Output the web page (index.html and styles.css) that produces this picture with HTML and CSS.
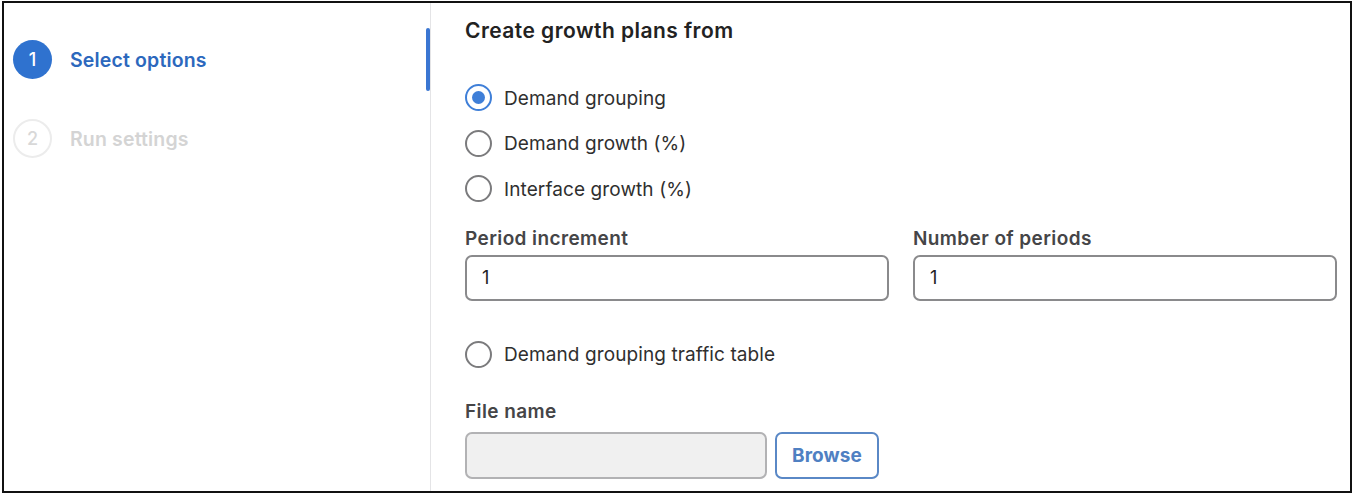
FILE: index.html
```html
<!DOCTYPE html>
<html lang="en">
<head>
<meta charset="utf-8">
<title>Create growth plans</title>
<link rel="stylesheet" href="styles.css">
</head>
<body>
<div class="frame">
  <aside class="sidebar">
    <div class="indicator"></div>
    <div class="step step-active">
      <span class="step-num">1</span>
      <span class="step-label">Select options</span>
    </div>
    <div class="step step-disabled">
      <span class="step-num">2</span>
      <span class="step-label">Run settings</span>
    </div>
  </aside>
  <main class="content">
    <h2 class="title">Create growth plans from</h2>
    <div class="radio-group">
      <label class="radio-row"><span class="radio checked"></span><span class="radio-text">Demand grouping</span></label>
      <label class="radio-row"><span class="radio"></span><span class="radio-text">Demand growth (%)</span></label>
      <label class="radio-row"><span class="radio"></span><span class="radio-text">Interface growth (%)</span></label>
    </div>
    <div class="field-grid">
      <div class="field">
        <div class="field-label">Period increment</div>
        <div class="input">1</div>
      </div>
      <div class="field">
        <div class="field-label">Number of periods</div>
        <div class="input">1</div>
      </div>
    </div>
    <label class="radio-row table-row"><span class="radio"></span><span class="radio-text">Demand grouping traffic table</span></label>
    <div class="file-field">
      <div class="field-label file-label">File name</div>
      <div class="file-row">
        <div class="input input-disabled"></div>
        <button class="browse" type="button">Browse</button>
      </div>
    </div>
  </main>
</div>
</body>
</html>
```
FILE: styles.css
```css
* { box-sizing: border-box; }
html, body { margin: 0; padding: 0; background: #fff; }
body {
  font-family: Inter, "Noto Sans", "Liberation Sans", sans-serif;
  color: #333;
}
.frame {
  margin: 1px 0 0 2px;
  width: 1350px;
  height: 492px;
  border: 2px solid #111;
  display: flex;
  overflow: hidden;
}
.sidebar {
  position: relative;
  width: 427px;
  flex: none;
  border-right: 1px solid #e4e4e6;
  padding: 37px 0 0 9px;
}
.indicator {
  position: absolute;
  right: 0;
  top: 25px;
  width: 4px;
  height: 63px;
  border-radius: 2px;
  background: #3a76d2;
}
.step {
  display: flex;
  align-items: center;
  gap: 18px;
  height: 39px;
  margin-bottom: 40px;
}
.step-num {
  width: 39px;
  height: 39px;
  border-radius: 50%;
  display: flex;
  align-items: center;
  justify-content: center;
  font-size: 18px;
  font-weight: 500;
}
.step-label {
  font-size: 19.5px;
  font-weight: 600;
  letter-spacing: 0.15px;
}
.step-active .step-num { background: #2f72cf; color: #fff; }
.step-active .step-label { color: #2c68bd; }
.step-disabled .step-num { border: 2px solid #ececec; color: #d8d8d8; }
.step-disabled .step-label { color: #d4d4d4; }

.content {
  flex: 1;
  padding: 16px 13px 0 34px;
}
.title {
  margin: 0;
  font-size: 21px;
  font-weight: 600;
  line-height: 24px;
  letter-spacing: 0.45px;
  color: #222;
}
.radio-group {
  margin-top: 32px;
}
.radio-row {
  display: flex;
  align-items: center;
  gap: 12px;
  height: 45.5px;
}
.radio {
  width: 27px;
  height: 27px;
  border-radius: 50%;
  border: 2.5px solid #7b7b7d;
  flex: none;
  display: flex;
  align-items: center;
  justify-content: center;
}
.radio.checked { border-color: #3f7fd8; }
.radio.checked::after {
  content: "";
  width: 13px;
  height: 13px;
  border-radius: 50%;
  background: #3f7fd8;
}
.radio-text {
  font-size: 19px;
  letter-spacing: 0.1px;
  color: #2f2f2f;
  padding-top: 1px;
}
.field-grid {
  display: grid;
  grid-template-columns: 1fr 1fr;
  column-gap: 24px;
  margin-top: 16px;
}
.field-label {
  font-size: 19px;
  font-weight: 600;
  line-height: 22px;
  letter-spacing: 0.4px;
  color: #454547;
}
.input {
  margin-top: 5px;
  height: 46px;
  border: 2px solid #8a8a8c;
  border-radius: 7px;
  padding: 0 15px;
  display: flex;
  align-items: center;
  font-size: 18px;
  color: #222;
}
.table-row {
  margin-top: 31px;
}
.file-field {
  margin-top: 24px;
}
.file-row {
  display: flex;
  gap: 8px;
  margin-top: 9px;
}
.file-row .input { margin-top: 0; height: 47px; }
.input-disabled {
  width: 302px;
  background: #f0f0f0;
  border-color: #b2b2b4;
}
.browse {
  width: 104px;
  height: 47px;
  border: 2px solid #5a88c6;
  border-radius: 7px;
  background: #fff;
  color: #4f80c2;
  font-family: inherit;
  font-size: 19px;
  font-weight: 700;
  letter-spacing: 0.1px;
  padding: 0;
}
```
